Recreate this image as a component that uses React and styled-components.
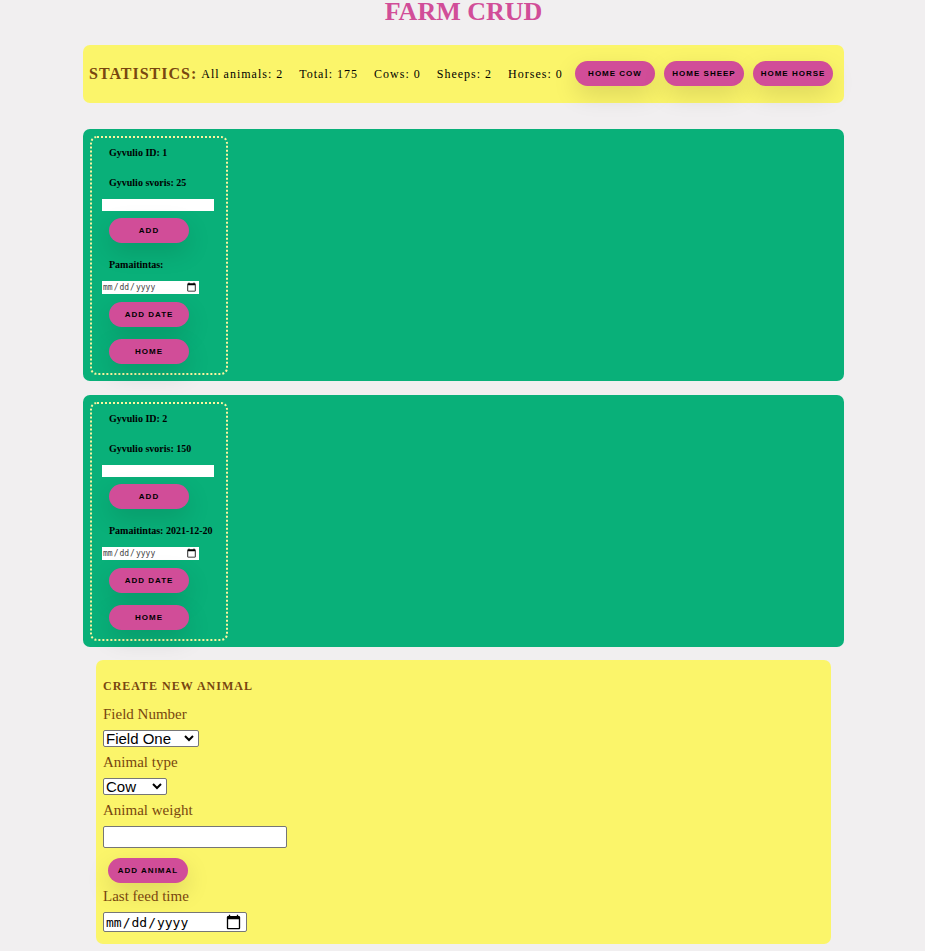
import React from 'react';
import styled, { createGlobalStyle } from 'styled-components';

const GlobalStyle = createGlobalStyle`
  * { box-sizing: border-box; }
  body {
    margin: 0;
    background: #f1eff0;
    font-family: "Liberation Serif", "Times New Roman", serif;
    color: #000;
  }
`;

const Page = styled.main`
  padding: 0 81px 6px 83px;
`;

const Title = styled.h1`
  margin: 0 0 21px;
  font-size: 26px;
  line-height: 24px;
  text-align: center;
  color: #d14d98;
`;

const Statistics = styled.section`
  display: flex;
  align-items: center;
  min-height: 58px;
  margin-bottom: 26px;
  padding: 0 11px 1px 6px;
  border-radius: 7px;
  background: #fbf56a;
`;

const StatisticsTitle = styled.h2`
  margin: 0 4px 0 0;
  font-size: 16px;
  letter-spacing: 1px;
  color: #78460f;
`;

const StatList = styled.div`
  display: flex;
  gap: 16px;
  padding-top: 2px;
  font-size: 12px;
  letter-spacing: 1px;
  white-space: nowrap;
`;

const StatButtons = styled.div`
  display: flex;
  gap: 9px;
  margin-left: auto;
`;

const Button = styled.button`
  width: 80px;
  height: 25px;
  flex: none;
  padding: 0;
  border: 0;
  border-radius: 13px;
  background: #d14d98;
  box-shadow: 0 9px 24px rgba(0, 0, 0, 0.13);
  color: #000;
  font-family: "Liberation Sans", Arial, sans-serif;
  font-size: 8px;
  font-weight: 700;
  letter-spacing: 1px;
  text-transform: uppercase;
  white-space: nowrap;
  cursor: pointer;
`;

const FieldList = styled.div`
  display: grid;
  gap: 14px;
  margin-bottom: 13px;
`;

const Field = styled.section`
  display: flex;
  padding: 7px 7px 6px;
  border-radius: 7px;
  background: #09b079;
`;

const AnimalCard = styled.article`
  display: flex;
  flex-direction: column;
  align-items: flex-start;
  width: 138px;
  padding: 9px 10px;
  border: 2px dotted #fbf5a0;
  border-radius: 7px;
`;

const AnimalText = styled.label`
  margin: 0 0 18px 7px;
  font-size: 10px;
  font-weight: 700;
  line-height: 12px;
  white-space: nowrap;
`;

const InputText = styled(AnimalText)`
  margin-bottom: 10px;
`;

const WeightInput = styled.input`
  width: 112px;
  height: 12px;
  padding: 0 2px;
  border: 0;
  background: #fff;
  font-size: 9px;
`;

const FeedInput = styled.input`
  width: 97px;
  height: 13px;
  padding: 0 2px 0 0;
  border: 0;
  background: #fff;
  color: #444;
  font-family: "DejaVu Sans Mono", monospace;
  font-size: 8px;

  &::-webkit-calendar-picker-indicator {
    width: 11px;
    height: 11px;
    padding: 0;
    background-size: contain;
  }
`;

const CardButton = styled(Button)`
  margin: ${({ $margin }) => $margin};
`;

const CreateForm = styled.form`
  display: flex;
  flex-direction: column;
  align-items: flex-start;
  margin: 0 13px;
  padding: 18px 7px 12px;
  border-radius: 7px;
  background: #fbf56a;
  color: #78460f;
`;

const FormTitle = styled.h2`
  margin: 0 0 11px;
  font-size: 12px;
  line-height: 16px;
  letter-spacing: 1px;
`;

const FormLabel = styled.label`
  font-size: 15px;
  line-height: 18px;
  margin-bottom: 7px;
`;

const SelectBox = styled.div`
  position: relative;
  width: ${({ $width }) => $width};
  height: 17px;
  margin-bottom: 6px;
`;

const Select = styled.select`
  display: block;
  appearance: none;
  width: 100%;
  height: 100%;
  padding: 0 18px 0 2px;
  border: 1px solid #767676;
  border-radius: 2px;
  background: #fff;
  color: #000;
  font-family: "Liberation Sans", Arial, sans-serif;
  font-size: 15px;
  line-height: 15px;
`;

const Chevron = styled.svg`
  position: absolute;
  right: 5px;
  top: 5px;
  width: 10px;
  height: 7px;
  fill: none;
  stroke: #000;
  stroke-width: 2;
  pointer-events: none;
`;

const FormInput = styled.input`
  width: 184px;
  height: 22px;
  padding: 1px 2px;
  border: 1px solid #767676;
  border-radius: 2px;
  background: #fff;
  font-size: 15px;
`;

const FormDate = styled(FormInput)`
  width: 144px;
  height: 20px;
  padding: 0 4px 0 1px;
  color: #000;
  font-family: "DejaVu Sans Mono", monospace;
  font-size: 13px;

  &::-webkit-calendar-picker-indicator {
    width: 17px;
    height: 17px;
    padding: 0;
    background-size: contain;
  }
`;

const stats = ['All animals: 2', 'Total: 175', 'Cows: 0', 'Sheeps: 2', 'Horses: 0'];
const homeActions = ['Home cow', 'Home sheep', 'Home horse'];
const animals = [
  { id: 1, weight: 25, fed: '' },
  { id: 2, weight: 150, fed: '2021-12-20' },
];

function Animal({ id, weight, fed }) {
  return (
    <Field>
      <AnimalCard>
        <AnimalText as="span">Gyvulio ID: {id}</AnimalText>
        <InputText htmlFor={`weight-${id}`}>Gyvulio svoris: {weight}</InputText>
        <WeightInput id={`weight-${id}`} type="text" />
        <CardButton type="button" $margin="7px 0 16px 7px">Add</CardButton>
        <InputText htmlFor={`fed-${id}`}>Pamaitintas: {fed}</InputText>
        <FeedInput id={`fed-${id}`} type="date" />
        <CardButton type="button" $margin="8px 0 12px 7px">Add date</CardButton>
        <CardButton type="button" $margin="0 0 0 7px">Home</CardButton>
      </AnimalCard>
    </Field>
  );
}

function SelectField({ id, label, width, options }) {
  return (
    <>
      <FormLabel htmlFor={id}>{label}</FormLabel>
      <SelectBox $width={width}>
        <Select id={id}>
          {options.map((option) => <option key={option}>{option}</option>)}
        </Select>
        <Chevron viewBox="0 0 10 7" aria-hidden="true">
          <path d="M1 1l4 4 4-4" />
        </Chevron>
      </SelectBox>
    </>
  );
}

export default function App() {
  return (
    <>
      <GlobalStyle />
      <Page>
        <Title>FARM CRUD</Title>
        <Statistics>
          <StatisticsTitle>STATISTICS:</StatisticsTitle>
          <StatList>
            {stats.map((text) => <span key={text}>{text}</span>)}
          </StatList>
          <StatButtons>
            {homeActions.map((text) => <Button key={text} type="button">{text}</Button>)}
          </StatButtons>
        </Statistics>
        <FieldList>
          {animals.map((animal) => <Animal key={animal.id} {...animal} />)}
        </FieldList>
        <CreateForm onSubmit={(event) => event.preventDefault()}>
          <FormTitle>CREATE NEW ANIMAL</FormTitle>
          <SelectField id="field" label="Field Number" width="96px" options={['Field One', 'Field Two']} />
          <SelectField id="type" label="Animal type" width="64px" options={['Cow', 'Sheep', 'Horse']} />
          <FormLabel htmlFor="weight">Animal weight</FormLabel>
          <FormInput id="weight" type="text" />
          <CardButton type="submit" $margin="10px 0 4px 5px">Add animal</CardButton>
          <FormLabel htmlFor="feed-time">Last feed time</FormLabel>
          <FormDate id="feed-time" type="date" />
        </CreateForm>
      </Page>
    </>
  );
}
